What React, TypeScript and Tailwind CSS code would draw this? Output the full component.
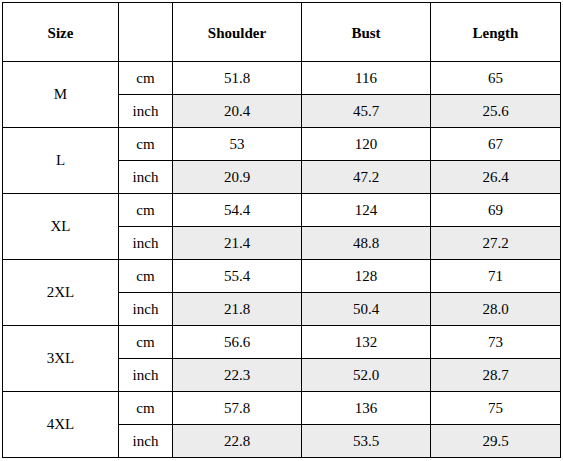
import React from 'react';

const rows = [
  { size: 'M', cm: ['51.8', '116', '65'], inch: ['20.4', '45.7', '25.6'] },
  { size: 'L', cm: ['53', '120', '67'], inch: ['20.9', '47.2', '26.4'] },
  { size: 'XL', cm: ['54.4', '124', '69'], inch: ['21.4', '48.8', '27.2'] },
  { size: '2XL', cm: ['55.4', '128', '71'], inch: ['21.8', '50.4', '28.0'] },
  { size: '3XL', cm: ['56.6', '132', '73'], inch: ['22.3', '52.0', '28.7'] },
  { size: '4XL', cm: ['57.8', '136', '75'], inch: ['22.8', '53.5', '29.5'] },
];

export default function App() {
  return (
    <div className="w-[563px] h-[461px] bg-white pl-[2px] pt-[2px] text-black font-['Liberation_Serif','Times_New_Roman',serif] text-[15px] leading-none">
      <table className="table-fixed border-collapse w-[558px] text-center">
        <colgroup>
          <col className="w-[116px]" />
          <col className="w-[54px]" />
          <col className="w-[129px]" />
          <col className="w-[129px]" />
          <col className="w-[130px]" />
        </colgroup>
        <thead>
          <tr className="h-[59px]">
            <th className="border border-black font-bold pt-[2px]">Size</th>
            <th className="border border-black"></th>
            <th className="border border-black font-bold pt-[2px]">Shoulder</th>
            <th className="border border-black font-bold pt-[2px]">Bust</th>
            <th className="border border-black font-bold pt-[2px]">Length</th>
          </tr>
        </thead>
        <tbody>
          {rows.map((r) => (
            <React.Fragment key={r.size}>
              <tr className="h-[33px]">
                <td rowSpan={2} className="border border-black">{r.size}</td>
                <td className="border border-black">cm</td>
                {r.cm.map((v, i) => (
                  <td key={i} className="border border-black">{v}</td>
                ))}
              </tr>
              <tr className="h-[33px]">
                <td className="border border-black">inch</td>
                {r.inch.map((v, i) => (
                  <td key={i} className="border border-black bg-[#ececec]">{v}</td>
                ))}
              </tr>
            </React.Fragment>
          ))}
        </tbody>
      </table>
    </div>
  );
}
